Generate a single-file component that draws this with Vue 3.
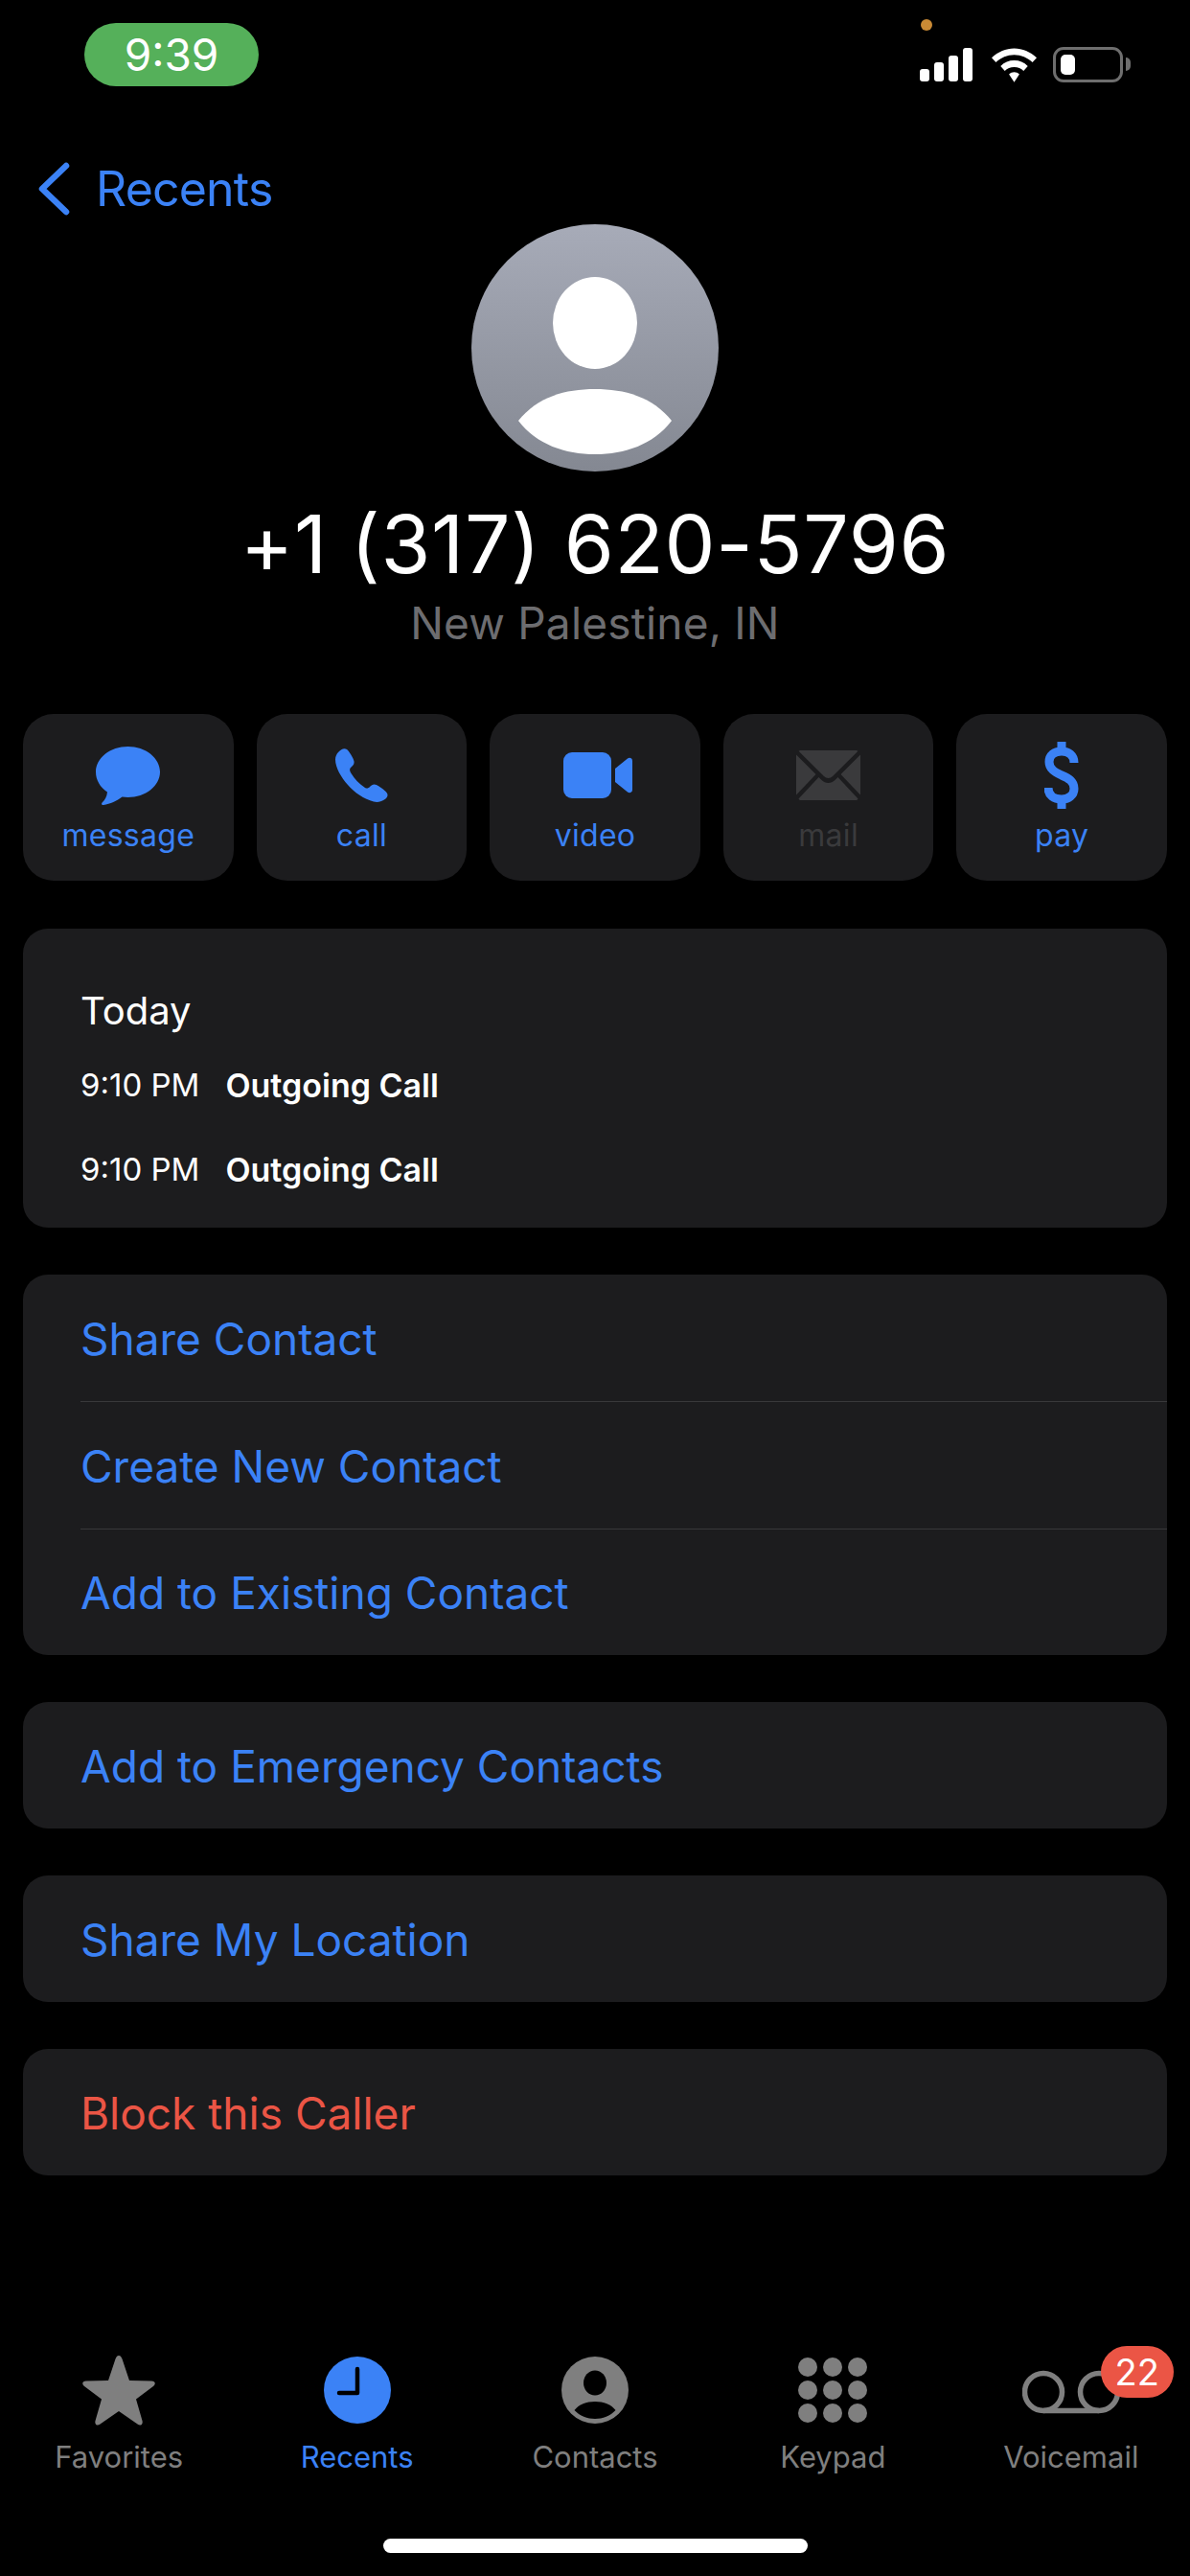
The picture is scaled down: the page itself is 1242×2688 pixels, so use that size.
<template>
  <div class="screen">
    <header class="status">
      <div class="clock">9:39</div>
      <span class="cam-dot"></span>
      <div class="status-icons">
        <svg class="signal" viewBox="0 0 55 35" fill="#fff">
          <rect x="0" y="22" width="10" height="13" rx="3" />
          <rect x="15" y="15" width="10" height="20" rx="3" />
          <rect x="30" y="8" width="10" height="27" rx="3" />
          <rect x="45" y="0" width="10" height="35" rx="3" />
        </svg>
        <svg class="wifi" viewBox="0 0 48 36" fill="#fff">
          <path d="M24 0C33 0 41 3.500 48 10L43.500 15C38 10 31.500 7 24 7C16.500 7 10 10 4.500 15L0 10C7 3.500 15 0 24 0Z" />
          <path d="M24 13C29.500 13 34.500 15 38.500 19L34 24C31.500 21.500 28 20 24 20C20 20 16.500 21.500 14 24L9.500 19C13.500 15 18.500 13 24 13Z" />
          <path d="M24 25.500C26 25.500 28 26.300 29.500 27.700L24 36L18.500 27.700C20 26.300 22 25.500 24 25.500Z" />
        </svg>
        <div class="battery">
          <span class="battery-level"></span>
        </div>
      </div>
    </header>

    <nav class="back">
      <svg class="chevron" viewBox="0 0 34 56" fill="none" stroke="#3b82f6" stroke-width="6.500" stroke-linecap="round" stroke-linejoin="round">
        <path d="M30 4L5 28L30 52" />
      </svg>
      <span>Recents</span>
    </nav>

    <section class="contact">
      <svg class="avatar" viewBox="0 0 258 258">
        <defs>
          <linearGradient id="avatarFill" x1="0" y1="0" x2="0" y2="1">
            <stop offset="0" stop-color="#a7abb8" />
            <stop offset="1" stop-color="#848892" />
          </linearGradient>
        </defs>
        <circle cx="129" cy="129" r="129" fill="url(#avatarFill)" />
        <ellipse cx="129" cy="103" rx="44" ry="48" fill="#fff" />
        <path d="M49 205C69 180 98 172 129 172C160 172 189 180 209 205C190 230 160 240 129 240C98 240 68 230 49 205Z" fill="#fff" />
      </svg>
      <h1 class="number">+1 (317) 620-5796</h1>
      <p class="place">New Palestine, IN</p>
    </section>

    <div class="actions">
      <div v-for="a in actions" :key="a.label" class="action" :class="{ disabled: a.disabled }">
        <div class="action-icon">
          <svg v-if="a.icon === 'message'" width="67" height="61" viewBox="0 0 67 61" fill="#3b82f6">
            <path d="M33.500 0C52 0 67 12 67 26.500C67 41 52 53 33.500 53C31.500 53 29.500 52.800 27.500 52.500C22 56.500 15 60 8 61C6 61.200 5.500 59.500 6.800 58.300C9.500 55.500 11.500 52.500 12 47.500C4.500 42.500 0 35 0 26.500C0 12 15 0 33.500 0Z" />
          </svg>
          <svg v-else-if="a.icon === 'call'" width="55" height="56" viewBox="0 0 55 56" fill="#3b82f6">
            <path d="M3 4C6 0.500 9.500 -0.800 12 1C14 2.500 19 10 19.500 13.500C20 16.500 18 18 16 20C14.500 21.500 15 23.500 16.500 26C20 32 25 37 31 41C33 42 34.500 41.500 36 40C38 38 40 36.500 43 38C46 39.500 51 43 53.500 46C55.500 48.500 54.500 51.500 51 53.500C47.500 55.700 44 56.500 40 55.500C30 53 20 46 13 38C6 30 0 20 0 11.500C0 8.500 1.200 6 3 4Z" />
          </svg>
          <svg v-else-if="a.icon === 'video'" class="video-icon" width="72" height="48" viewBox="0 0 72 48" fill="#3b82f6">
            <rect x="0" y="0" width="50" height="48" rx="9" />
            <path d="M54 17L67 6.500C69 5 72 6 72 9V39C72 42 69 43 67 41.500L54 31Z" />
          </svg>
          <svg v-else-if="a.icon === 'mail'" width="67" height="52" viewBox="0 0 67 52" fill="#3a3a3c">
            <path d="M5 0H62C63 0 64 0.300 64.500 0.800L38 27C35.500 29.500 31.500 29.500 29 27L2.500 0.800C3 0.300 4 0 5 0Z" />
            <path d="M0 4.500L20.500 25L0 46.500V4.500Z" />
            <path d="M67 4.500L46.500 25L67 46.500V4.500Z" />
            <path d="M23.500 28L26.500 31C30.500 35 36.500 35 40.500 31L43.500 28L64.500 50.500C64 51.500 63 52 62 52H5C4 52 3 51.500 2.500 50.500L23.500 28Z" />
          </svg>
          <svg v-else width="36" height="70" viewBox="0 0 36 70" fill="none" stroke="#3b82f6" stroke-width="9">
            <path d="M18 0V10M18 60V70" />
            <path d="M31 22C31 14 25 10 18 10C10 10 5 14 5 21C5 29 12 32 18 35C25 38 31 41 31 49C31 56 25 60 18 60C10 60 4 56 4 48" />
          </svg>
        </div>
        <span class="action-label">{{ a.label }}</span>
      </div>
    </div>

    <section class="card history">
      <div class="day">Today</div>
      <div v-for="(c, i) in calls" :key="i" class="call-row">
        <span class="call-time">{{ c.time }}</span>
        <span class="call-type">{{ c.type }}</span>
      </div>
    </section>

    <div class="card">
      <div v-for="item in contactOptions" :key="item" class="row">
        <span>{{ item }}</span>
      </div>
    </div>

    <div class="card">
      <div class="row"><span>Add to Emergency Contacts</span></div>
    </div>

    <div class="card">
      <div class="row"><span>Share My Location</span></div>
    </div>

    <div class="card">
      <div class="row danger"><span>Block this Caller</span></div>
    </div>

    <footer class="tabs">
      <div v-for="t in tabs" :key="t.label" class="tab" :class="{ active: t.active }">
        <div class="tab-icon">
          <svg v-if="t.icon === 'star'" width="76" height="73" viewBox="0 0 76 73" fill="#7f7f7f">
            <path d="M38 0C39.500 0 40.500 1 41.500 3.500L49 26L72 26.500C76 26.500 77 29.500 74 32L56 45.500L62.500 68C63.500 72 60.500 74 57.500 71.500L38 58L18.500 71.500C15.500 74 12.500 72 13.500 68L20 45.500L2 32C-1 29.500 0 26.500 4 26.500L27 26L34.500 3.500C35.500 1 36.500 0 38 0Z" />
          </svg>
          <svg v-else-if="t.icon === 'clock'" width="70" height="70" viewBox="0 0 70 70">
            <circle cx="35" cy="35" r="35" fill="#3b82f6" />
            <path d="M35 13V38H16" fill="none" stroke="#000" stroke-width="4.500" stroke-linecap="round" stroke-linejoin="round" />
          </svg>
          <svg v-else-if="t.icon === 'person'" width="70" height="70" viewBox="0 0 70 70">
            <circle cx="35" cy="35" r="35" fill="#7f7f7f" />
            <ellipse cx="35" cy="27.500" rx="12" ry="13" fill="#000" />
            <path d="M13.500 56C18 50 26 47 35 47C44 47 52 50 56.500 56C51 62 43 65 35 65C27 65 19 62 13.500 56Z" fill="#000" />
          </svg>
          <svg v-else-if="t.icon === 'keypad'" width="72" height="68" viewBox="0 0 72 68" fill="#7f7f7f">
            <template v-for="y in [10, 34, 58]" :key="y">
              <circle v-for="x in [10, 36, 62]" :key="x" :cx="x" :cy="y" r="10" />
            </template>
          </svg>
          <svg v-else class="tape" width="102" height="46" viewBox="0 0 102 46" fill="none" stroke="#7f7f7f" stroke-width="5.500">
            <circle cx="22" cy="23" r="19.500" />
            <circle cx="80" cy="23" r="19.500" />
            <path d="M22 42.500H80" />
          </svg>
          <span v-if="t.badge" class="badge">{{ t.badge }}</span>
        </div>
        <span class="tab-label">{{ t.label }}</span>
      </div>
    </footer>

    <div class="home-bar"></div>
  </div>
</template>

<script setup>
const actions = [
  { label: 'message', icon: 'message' },
  { label: 'call', icon: 'call' },
  { label: 'video', icon: 'video' },
  { label: 'mail', icon: 'mail', disabled: true },
  { label: 'pay', icon: 'pay' }
]

const calls = [
  { time: '9:10 PM', type: 'Outgoing Call' },
  { time: '9:10 PM', type: 'Outgoing Call' }
]

const contactOptions = ['Share Contact', 'Create New Contact', 'Add to Existing Contact']

const tabs = [
  { label: 'Favorites', icon: 'star' },
  { label: 'Recents', icon: 'clock', active: true },
  { label: 'Contacts', icon: 'person' },
  { label: 'Keypad', icon: 'keypad' },
  { label: 'Voicemail', icon: 'tape', badge: 22 }
]
</script>

<style>
html,
body {
  background: #000;
}
</style>

<style scoped>
.screen {
  position: relative;
  box-sizing: border-box;
  width: 1242px;
  height: 2688px;
  overflow: hidden;
  background: #000;
  color: #fff;
  font-family: Inter, "Liberation Sans", sans-serif;
  display: flex;
  flex-direction: column;
}

.status {
  position: relative;
  height: 96px;
  padding: 24px 70px 0 88px;
  box-sizing: border-box;
  display: flex;
  justify-content: space-between;
  align-items: flex-start;
}

.clock {
  width: 182px;
  height: 66px;
  border-radius: 33px;
  background: #55b05a;
  font-size: 46px;
  line-height: 66px;
  text-align: center;
}

.cam-dot {
  position: absolute;
  left: 961px;
  top: 20px;
  width: 12px;
  height: 12px;
  border-radius: 50%;
  background: #c98a35;
}

.status-icons {
  display: flex;
  align-items: center;
  gap: 20px;
  margin-top: 25px;
}

.signal {
  width: 55px;
  height: 35px;
}

.wifi {
  width: 47px;
  height: 36px;
  margin-right: -3px;
}

.battery {
  position: relative;
  box-sizing: border-box;
  width: 73px;
  height: 37px;
  padding: 5px;
  border: 3px solid #6e6e6e;
  border-radius: 11px;
}

.battery::after {
  content: "";
  position: absolute;
  right: -11px;
  top: 8px;
  width: 5px;
  height: 14px;
  border-radius: 0 6px 6px 0;
  background: #6e6e6e;
}

.battery-level {
  display: block;
  width: 15px;
  height: 100%;
  border-radius: 5px;
  background: #fff;
}

.back {
  height: 56px;
  margin-top: 73px;
  padding-left: 39px;
  display: flex;
  align-items: center;
  gap: 27px;
  color: #3b82f6;
  font-size: 50px;
  letter-spacing: -0.8px;
}

.chevron {
  width: 34px;
  height: 56px;
}

.contact {
  margin-top: 9px;
  display: flex;
  flex-direction: column;
  align-items: center;
}

.avatar {
  width: 258px;
  height: 258px;
}

.number {
  margin: 32px 0 0;
  font-size: 84px;
  font-weight: 400;
  line-height: 88px;
  letter-spacing: 0.7px;
}

.place {
  margin: 10px 0 0;
  color: #6d6d70;
  font-size: 46px;
  line-height: 56px;
  letter-spacing: 0.2px;
}

.actions {
  margin: 67px 24px 1.500px;
  display: grid;
  grid-template-columns: repeat(5, 1fr);
  gap: 24px;
}

.action {
  height: 174px;
  border-radius: 32px;
  background: #1c1c1e;
  display: flex;
  flex-direction: column;
  align-items: center;
  color: #3b82f6;
}

.action.disabled {
  color: #3a3a3c;
}

.action-icon {
  height: 76px;
  margin-top: 26px;
  display: flex;
  align-items: center;
  justify-content: center;
}

.video-icon {
  margin-left: 6px;
}

.action-label {
  margin-top: 5px;
  font-size: 32px;
  line-height: 40px;
  letter-spacing: 0.3px;
}

.card {
  margin: 48.500px 24px 0;
  border-radius: 26px;
  background: #1c1c1e;
}

.history {
  height: 312px;
  box-sizing: border-box;
  padding: 60px 60px 0;
}

.day {
  font-size: 40px;
  line-height: 52px;
  margin-bottom: 7px;
}

.call-row {
  display: flex;
  align-items: center;
  gap: 27px;
  height: 88px;
  font-size: 33px;
}

.call-type {
  font-size: 34px;
  font-weight: 600;
}

.row {
  height: 132.500px;
  padding-left: 60px;
  color: #3b82f6;
  font-size: 46px;
}

.row span {
  display: flex;
  align-items: center;
  height: 100%;
  padding-top: 2px;
  box-sizing: border-box;
}

.row + .row span {
  border-top: 1px solid #38383a;
}

.row.danger {
  color: #eb5545;
}

.tabs {
  margin-top: auto;
  display: grid;
  grid-template-columns: repeat(5, 1fr);
}

.tab {
  display: flex;
  flex-direction: column;
  align-items: center;
  color: #7f7f7f;
}

.tab.active {
  color: #3b82f6;
}

.tab-icon {
  position: relative;
  height: 84px;
  display: flex;
  align-items: center;
  justify-content: center;
}

.tape {
  margin-top: 4px;
}

.tab-label {
  margin-top: 9px;
  font-size: 31px;
  line-height: 38px;
}

.badge {
  position: absolute;
  right: -56px;
  top: -4px;
  min-width: 76px;
  height: 54px;
  border-radius: 27px;
  background: #eb5545;
  color: #fff;
  font-size: 38px;
  line-height: 54px;
  text-align: center;
}

.home-bar {
  flex: none;
  width: 443px;
  height: 15px;
  margin: 66px 0 24px 400px;
  border-radius: 8px;
  background: #fff;
}
</style>
